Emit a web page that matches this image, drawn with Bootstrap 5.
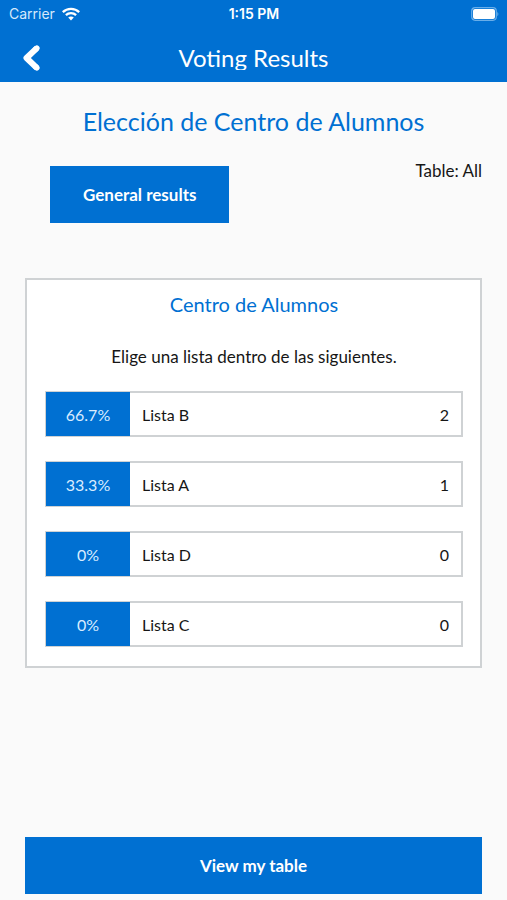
<!DOCTYPE html>
<html lang="es">
<head>
<meta charset="utf-8">
<meta name="viewport" content="width=device-width, initial-scale=1">
<title>Voting Results</title>
<link href="https://cdn.jsdelivr.net/npm/bootstrap@5.3.0/dist/css/bootstrap.min.css" rel="stylesheet">
<style>
  :root { --brand: #0070d2; --edge: #cfd2d4; }
  body { font-family: Lato, "Liberation Sans", sans-serif; font-size: 17px; line-height: 24px; color: #161616; background: #fafafa; }
  .app-header { background: var(--brand); color: #fff; }
  .status-bar { font-family: Inter, "Liberation Sans", sans-serif; font-size: 14px; line-height: 28px; padding: 0 8px 0 9px; }
  .status-bar > * { flex: 1 1 0; }
  .status-carrier { color: #d6e9fb; gap: 7px; }
  .title-bar { display: grid; grid-template-columns: 64px 1fr 64px; height: 54px; padding-top: 6px; }
  .screen-title { font-size: 24px; line-height: 24px; overflow: hidden; }
  .back-btn { padding: 0 0 0 20px; }
  .election-title { font-size: 25px; line-height: 32px; color: var(--brand); margin: 23px 0 29px; }
  .screen-body { padding: 0 25px 6px; }
  .btn-brand { --bs-btn-color: #fff; --bs-btn-bg: var(--brand); --bs-btn-hover-color: #fff; --bs-btn-hover-bg: #005fb3; --bs-btn-active-color: #fff; --bs-btn-active-bg: #005fb3; --bs-btn-font-size: 17px; --bs-btn-line-height: 25px; --bs-btn-padding-y: 16px; --bs-btn-padding-x: 33px; --bs-btn-font-weight: 700; }
  .filters { padding-left: 25px; margin-bottom: 55px; }
  .table-label { margin-top: -7px; }
  .results-panel { background: #fff; border: 2px solid var(--edge); padding: 10px 17px 10px 18px; }
  .panel-title { font-size: 20px; line-height: 28px; color: var(--brand); margin-bottom: 27px; }
  .option-list { gap: 24px; margin: 22px 0 9px; font-size: 16px; }
  .option-row { border: 2px solid var(--edge); border-left-width: 1px; height: 46px; }
  .option-share { width: 84px; background: var(--brand); color: #d9ecff; margin: -1px 0; padding-top: 2px; }
  .option-text { padding: 2px 12px 0; }
</style>
</head>
<body class="d-flex flex-column min-vh-100">
<header class="app-header">
  <div class="status-bar d-flex">
    <div class="status-carrier d-flex align-items-center">
      <span>Carrier</span>
      <svg width="18" height="14" viewBox="0 0 18 14" fill="none" stroke="#fff" stroke-width="2.3" aria-hidden="true">
        <path d="M.8 5.1C5.300 .8 12.700 .8 17.200 5.100"/>
        <path d="M3.900 8.200C6.700 5.500 11.300 5.500 14.100 8.200"/>
        <path d="M6.200 10.500C7.800 9 10.200 9 11.800 10.500L9 13.400Z" fill="#fff" stroke="none"/>
      </svg>
    </div>
    <div class="text-center fw-semibold">1:15 PM</div>
    <div class="d-flex align-items-center justify-content-end">
      <svg width="28" height="14" viewBox="0 0 28 14" role="img" aria-label="Battery full">
        <rect x=".7" y=".7" width="24.600" height="12.600" rx="3.500" fill="none" stroke="#69aee9" stroke-width="1.200"/>
        <rect x="2" y="2" width="22" height="10" rx="2" fill="#fff"/>
        <path d="M26.300 4.700q2.200 2.300 0 4.600z" fill="#69aee9"/>
      </svg>
    </div>
  </div>
  <div class="title-bar align-items-center">
    <button type="button" class="btn back-btn border-0 d-flex align-items-center" aria-label="Back">
      <svg width="22" height="28" viewBox="0 0 22 28" fill="none" stroke="#fff" stroke-width="6" aria-hidden="true">
        <path d="M16.800 4.200L6.500 14L16.800 23.800" stroke-linejoin="round"/>
        <path d="M16.800 4.200L15.500 5.400M16.800 23.800L15.500 22.600" stroke-linecap="round" stroke-width="5.600"/>
      </svg>
    </button>
    <h1 class="screen-title fw-normal text-center m-0">Voting Results</h1>
  </div>
</header>
<main class="screen-body d-flex flex-column flex-grow-1">
  <h2 class="election-title fw-normal text-center">Elección de Centro de Alumnos</h2>
  <div class="filters d-flex justify-content-between align-items-start">
    <button type="button" class="btn btn-brand border-0 rounded-0">General results</button>
    <span class="table-label">Table: All</span>
  </div>
  <section class="results-panel">
    <h3 class="panel-title fw-normal text-center">Centro de Alumnos</h3>
    <p class="text-center m-0">Elige una lista dentro de las siguientes.</p>
    <ul class="option-list list-unstyled d-flex flex-column">
      <li class="option-row d-flex"><span class="option-share d-flex align-items-center justify-content-center">66.7%</span><span class="option-text d-flex flex-grow-1 align-items-center justify-content-between"><span>Lista B</span><span>2</span></span></li>
      <li class="option-row d-flex"><span class="option-share d-flex align-items-center justify-content-center">33.3%</span><span class="option-text d-flex flex-grow-1 align-items-center justify-content-between"><span>Lista A</span><span>1</span></span></li>
      <li class="option-row d-flex"><span class="option-share d-flex align-items-center justify-content-center">0%</span><span class="option-text d-flex flex-grow-1 align-items-center justify-content-between"><span>Lista D</span><span>0</span></span></li>
      <li class="option-row d-flex"><span class="option-share d-flex align-items-center justify-content-center">0%</span><span class="option-text d-flex flex-grow-1 align-items-center justify-content-between"><span>Lista C</span><span>0</span></span></li>
    </ul>
  </section>
  <button type="button" class="btn btn-brand border-0 rounded-0 w-100 mt-auto">View my table</button>
</main>
<script src="https://cdn.jsdelivr.net/npm/bootstrap@5.3.0/dist/js/bootstrap.bundle.min.js"></script>
</body>
</html>
